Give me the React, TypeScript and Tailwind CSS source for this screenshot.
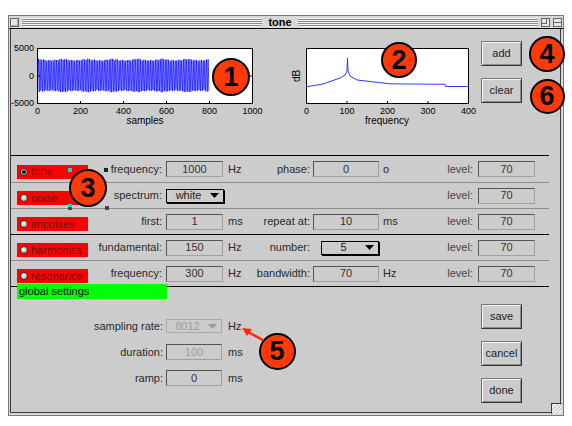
import React from 'react';

const txt = "font-['Liberation_Sans',Arial,sans-serif]";

const wave = Array.from({ length: 801 }, (_, n) => {
  const x = 24 + n * (171 / 800);
  const amp = 17 - 1.5 * Math.abs(Math.sin(n / 37));
  const y = 35.5 - amp * Math.sin((2 * Math.PI * 1000 * n) / 8012 + n * 0.031);
  return `${x.toFixed(2)},${y.toFixed(2)}`;
}).join(' ');

const Radio = ({ on }: { on?: boolean }) => (
  <span className="w-[8px] h-[8px] shrink-0 rounded-full border border-[#333] bg-[radial-gradient(circle_at_35%_35%,#ffffff,#9a9a9a)] flex items-center justify-center">
    {on && <span className="w-[4px] h-[4px] rounded-full bg-black" />}
  </span>
);

const Box = ({ children, w = 'w-[57px]', dim }: { children: React.ReactNode; w?: string; dim?: boolean }) => (
  <div
    className={`${w} h-[16px] bg-[#cccccc] border border-t-[#555555] border-l-[#555555] border-r-[#a0a0a0] border-b-[#a0a0a0] flex items-center justify-center text-[11px] leading-none ${dim ? 'text-[#a0a0a0]' : 'text-[#333333]'}`}
  >
    {children}
  </div>
);

const Select = ({ value, w = 'w-[57px]', dim }: { value: string; w?: string; dim?: boolean }) => (
  <div
    className={`${w} h-[14px] bg-[#cccccc] border flex items-center pr-[4px] text-[11px] leading-none ${dim ? 'border-[#a8a8a8] text-[#9c9c9c]' : 'border-black text-[#222222] shadow-[1px_1px_0_#000000]'}`}
  >
    <span className="flex-1 text-center">{value}</span>
    <svg width="9" height="5" viewBox="0 0 9 5">
      <path d="M0 0H9L4.5 5Z" fill={dim ? '#9c9c9c' : '#000000'} />
    </svg>
  </div>
);

const Btn = ({ label }: { label: string }) => (
  <div className="w-[41px] h-[25px] bg-[#cccccc] border border-[#777777] border-r-[#333333] border-b-[#333333] shadow-[inset_1px_1px_0_#f4f4f4,inset_-1px_-1px_0_#8a8a8a] flex items-center justify-center text-[11px] text-[#222222]">
    {label}
  </div>
);

const Badge = ({ n, x, y, d = 37 }: { n: string; x: number; y: number; d?: number }) => (
  <div
    className="absolute rounded-full bg-[#ff3a0a] border-2 border-black flex items-center justify-center text-[27px] font-bold text-black leading-none"
    style={{ left: x - d / 2, top: y - d / 2, width: d, height: d }}
  >
    {n}
  </div>
);

interface RowProps {
  name: string;
  on?: boolean;
  dark?: boolean;
  last?: boolean;
  h?: string;
  l1?: string;
  c1?: React.ReactNode;
  u1?: string;
  l2?: string;
  c2?: React.ReactNode;
  u2?: string;
}

const Row = ({ name, on, dark, last, h = 'h-[26px]', l1, c1, u1, l2, c2, u2 }: RowProps) => (
  <div
    className={`${h} flex items-center border-t ${dark ? 'border-t-black' : 'border-t-[#8c8c8c]'} ${last ? 'border-b border-b-black' : ''} text-[11px] text-[#2a2a2a]`}
  >
    <div className="ml-[6px] mt-[5px] w-[71px] h-[14px] bg-[#ff0000] flex items-center pl-[3px] gap-[3px] text-[#701010]">
      <Radio on={on} />
      <span>{name}</span>
    </div>
    <div className="w-[74px] text-right whitespace-nowrap">{l1}</div>
    <div className="ml-[4px] w-[57px]">{c1}</div>
    <div className="w-[22px] pl-[5px]">{u1}</div>
    <div className="w-[65px] text-right whitespace-nowrap">{l2}</div>
    <div className="ml-[3px] w-[66px] flex justify-end">{c2}</div>
    <div className="w-[41px] pl-[4px]">{u2}</div>
    <div className="w-[53px] text-right text-[#444444]">level:</div>
    <div className="ml-[5px]">
      <Box>70</Box>
    </div>
  </div>
);

const FormRow = ({ label, children, unit }: { label: string; children: React.ReactNode; unit: string }) => (
  <div className="h-[26px] flex items-center text-[11px] text-[#2a2a2a]">
    <div className="w-[152px] text-right whitespace-nowrap">{label}</div>
    <div className="ml-[3px] w-[56px]">{children}</div>
    <div className="pl-[6px]">{unit}</div>
  </div>
);

export default function App() {
  return (
    <div className={`relative w-[572px] h-[426px] bg-white pt-[15px] pl-[8px] overflow-hidden ${txt}`}>
      <div className="relative w-[556px] h-[401px] bg-[#d8d8d8] border border-[#7a7a7a] flex flex-col">
        {/* title bar */}
        <div className="h-[13px] border-b border-black flex items-center px-[1px] gap-[3px]">
          <div className="w-[9px] h-[9px] border border-[#666666] bg-[#e6e6e6] shadow-[inset_-1px_-1px_0_#aaaaaa]" />
          <div className="flex-1 h-[9px] bg-[repeating-linear-gradient(to_bottom,#f2f2f2_0px,#f2f2f2_1px,#8c8c8c_1px,#8c8c8c_2px)]" />
          <div className="px-[3px] text-[11px] font-bold leading-none text-black">tone</div>
          <div className="flex-1 h-[9px] bg-[repeating-linear-gradient(to_bottom,#f2f2f2_0px,#f2f2f2_1px,#8c8c8c_1px,#8c8c8c_2px)]" />
          <div className="w-[9px] h-[9px] border border-[#666666] bg-[#e6e6e6] relative">
            <div className="absolute left-0 top-0 w-[5px] h-[5px] border-r border-b border-[#666666]" />
          </div>
          <div className="w-[9px] h-[9px] border border-[#666666] bg-[#e6e6e6] flex flex-col justify-center">
            <div className="h-px bg-[#666666]" />
          </div>
        </div>

        {/* content */}
        <div className="flex-1 ml-[1px] mr-[2px] mb-[2px] bg-[#cccccc] border-l border-r border-b border-[#3a3a3a] flex flex-col">
          {/* plots */}
          <div className="h-[126px] flex items-start">
            <svg className="ml-[3px] mt-[11px] overflow-visible" width="250" height="88" fontFamily="Liberation Sans, Arial, sans-serif" fontSize="9">
              <rect x="23.5" y="8.5" width="215" height="55" fill="#ffffff" stroke="#000000" />
              <polyline points={wave} fill="none" stroke="#0000ff" strokeWidth="0.7" />
              {[0, 1, 2, 3, 4, 5].map(i => (
                <line key={i} x1={23.5 + i * 43} x2={23.5 + i * 43} y1="63" y2="61" stroke="#000" />
              ))}
              <line x1="236" x2="238.5" y1="36" y2="36" stroke="#000" />
              <line x1="23.5" x2="26" y1="36" y2="36" stroke="#000" />
              <text x="20" y="11" textAnchor="end">5000</text>
              <text x="20" y="39" textAnchor="end">0</text>
              <text x="20" y="66" textAnchor="end">-5000</text>
              {['0', '200', '400', '600', '800', '1000'].map((t, i) => (
                <text key={t} x={23.5 + i * 43} y="74" textAnchor="middle">{t}</text>
              ))}
              <text x="131" y="84" textAnchor="middle" fontSize="10">samples</text>
            </svg>

            <svg className="ml-[26px] mt-[11px] overflow-visible" width="185" height="88" fontFamily="Liberation Sans, Arial, sans-serif" fontSize="9">
              <rect x="16.5" y="8.5" width="162" height="55" fill="#ffffff" stroke="#000000" />
              <path
                d="M17 46.7L33 44L50 38L55 35L57 31L57.5 18L58 31L60 36L67 40L100 43.8L155 44.3L155.5 46.5L178 46.5"
                fill="none"
                stroke="#2b3cff"
                strokeWidth="1"
              />
              {[0, 1, 2, 3, 4].map(i => (
                <line key={i} x1={16.5 + i * 40.5} x2={16.5 + i * 40.5} y1="63" y2="61" stroke="#000" />
              ))}
              <text transform="translate(10 36) rotate(-90)" textAnchor="middle" fontSize="10">dB</text>
              {['0', '100', '200', '300', '400'].map((t, i) => (
                <text key={t} x={16.5 + i * 40.5} y="74" textAnchor="middle">{t}</text>
              ))}
              <text x="97" y="84" textAnchor="middle" fontSize="10">frequency</text>
            </svg>

            <div className="ml-[6px] mt-[12px] flex flex-col gap-[12px]">
              <Btn label="add" />
              <Btn label="clear" />
            </div>
          </div>

          {/* sources */}
          <div className="w-[538px]">
            <Row
              name="tone"
              on
              dark
              h="h-[27px]"
              l1="frequency:"
              c1={<Box>1000</Box>}
              u1="Hz"
              l2="phase:"
              c2={<Box w="w-[66px]">0</Box>}
              u2="o"
            />
            <Row name="noise" l1="spectrum:" c1={<Select value="white" w="w-[58px]" />} />
            <Row
              name="impulses"
              l1="first:"
              c1={<Box>1</Box>}
              u1="ms"
              l2="repeat at:"
              c2={<Box w="w-[66px]">10</Box>}
              u2="ms"
            />
            <Row
              name="harmonics"
              dark
              l1="fundamental:"
              c1={<Box>150</Box>}
              u1="Hz"
              l2="number:"
              c2={<Select value="5" w="w-[58px]" />}
            />
            <Row
              name="resonance"
              last
              h="h-[27px]"
              l1="frequency:"
              c1={<Box>300</Box>}
              u1="Hz"
              l2="bandwidth:"
              c2={<Box w="w-[66px]">70</Box>}
              u2="Hz"
            />
          </div>

          {/* global settings */}
          <div className="relative -mt-[3px] ml-[6px] w-[150px] h-[15px] bg-[#00ff00] pl-[2px] text-[11px] leading-[15px] text-black">
            global settings
          </div>

          <div className="flex">
            <div className="w-[470px] mt-[14px]">
              <FormRow label="sampling rate:" unit="Hz">
                <Select value="8012" w="w-[56px]" dim />
              </FormRow>
              <FormRow label="duration:" unit="ms">
                <Box w="w-[56px]" dim>100</Box>
              </FormRow>
              <FormRow label="ramp:" unit="ms">
                <Box w="w-[56px]">0</Box>
              </FormRow>
            </div>
            <div className="mt-[5px] flex flex-col gap-[12px]">
              <Btn label="save" />
              <Btn label="cancel" />
              <Btn label="done" />
            </div>
          </div>
        </div>

        {/* resize grip */}
        <div className="absolute right-[1px] bottom-[1px] w-[11px] h-[11px] border-l border-t border-[#3a3a3a] bg-[#d8d8d8] bg-[repeating-linear-gradient(135deg,#d8d8d8_0px,#d8d8d8_2px,#ffffff_2px,#ffffff_3px)]" />
      </div>

      {/* selection handles */}
      <div className="absolute left-[68px] top-[168px] w-[4px] h-[4px] bg-[#00e0e0]" />
      <div className="absolute left-[104px] top-[168px] w-[4px] h-[4px] bg-[#222222]" />
      <div className="absolute left-[68px] top-[204px] w-[4px] h-[3px] bg-[#00e0e0]" />
      <div className="absolute left-[68px] top-[207px] w-[4px] h-[3px] bg-[#444444]" />
      <div className="absolute left-[105px] top-[206px] w-[4px] h-[4px] bg-[#444444]" />

      {/* annotations */}
      <svg className="absolute left-0 top-0" width="572" height="426">
        <path d="M263 340L246 331" stroke="#ff2a00" strokeWidth="2.5" />
        <path d="M242 328L252 329L247 336Z" fill="#ff2a00" />
      </svg>
      <Badge n="1" x={231} y={77} d={38} />
      <Badge n="2" x={399} y={60} d={36} />
      <Badge n="3" x={88} y={188} d={38} />
      <Badge n="4" x={547} y={54} d={36} />
      <Badge n="6" x={547} y={96} d={35} />
      <Badge n="5" x={277} y={351} d={37} />
    </div>
  );
}
